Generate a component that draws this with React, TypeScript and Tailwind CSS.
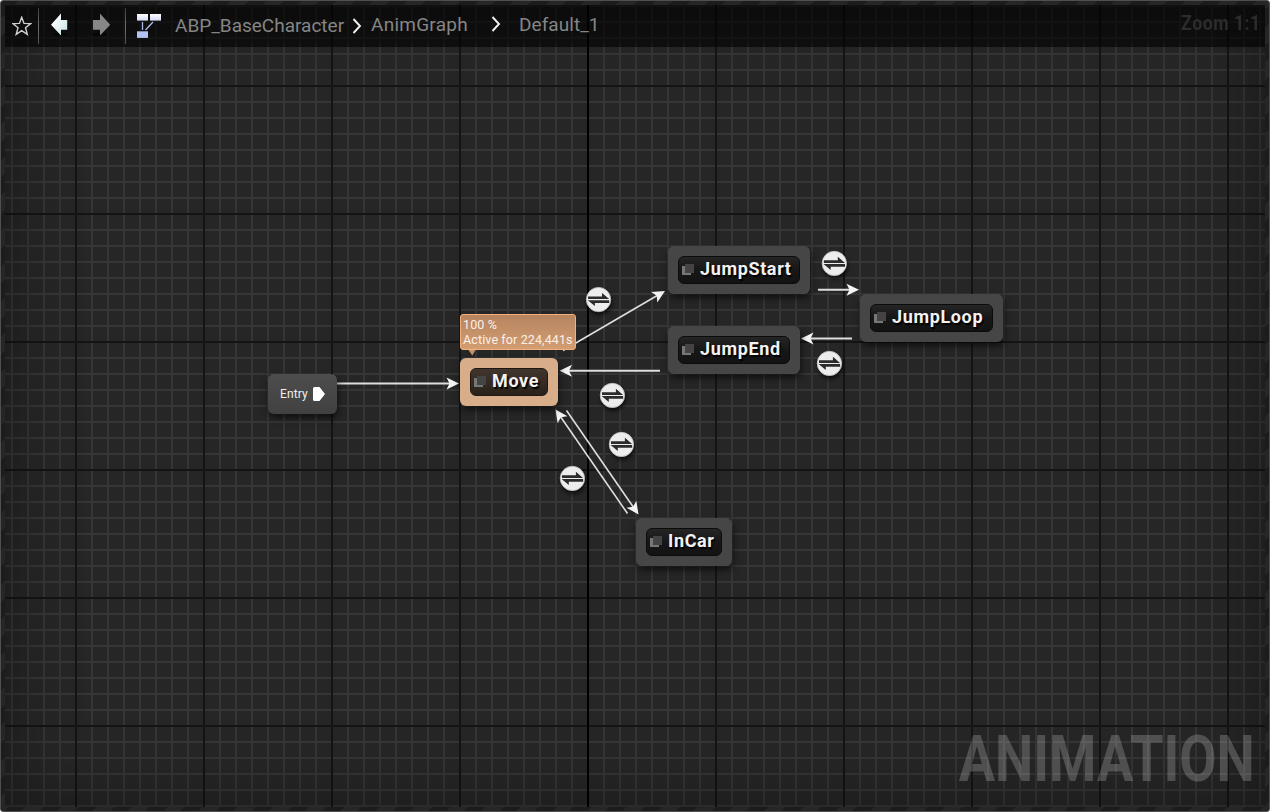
import React from "react";

const OPEN = "font-['Roboto',sans-serif]";

function Chevron() {
  return (
    <svg width="10" height="16" viewBox="0 0 10 16" className="shrink-0">
      <path d="M1.5 1 L8 8 L1.5 15" fill="none" stroke="#f2f2f2" strokeWidth="1.9" />
    </svg>
  );
}

function Header() {
  return (
    <header className="relative z-10 flex h-[42px] items-start bg-black/60">
      <div className="flex h-full w-[33px] pl-[7px] pt-[11px]">
        <svg width="20" height="20" viewBox="0 0 20 20">
          <path
            d="M9.7 1.2 L12 7.4 L18.7 7.6 L13.5 11.8 L15.3 18.4 L9.7 14.7 L4.2 18.4 L6 11.8 L0.8 7.6 L7.4 7.4 Z"
            fill="none"
            stroke="#cfcfcf"
            strokeWidth="1.4"
          />
        </svg>
      </div>
      <div className="mt-[3px] h-9 w-px bg-linear-to-b from-[#3c3c3c] via-[#707070] to-[#505050]" />
      <div className="w-[43px] pl-[11px] pt-[7px]">
        <svg width="20" height="26" viewBox="0 0 20 26">
          <defs>
            <linearGradient id="back" x1="0" y1="0" x2="1" y2="1">
              <stop offset="0.2" stopColor="#ffffff" />
              <stop offset="1" stopColor="#c4e4e4" />
            </linearGradient>
          </defs>
          <ellipse cx="11" cy="22.3" rx="7" ry="1.6" fill="#000" opacity="0.6" />
          <path d="M1 12.7 L11 1.4 V8 H17.2 V17.7 H11 V23.5 Z" fill="url(#back)" />
        </svg>
      </div>
      <div className="w-[43px] pt-[7px]">
        <svg width="43" height="26" viewBox="0 0 43 26">
          <ellipse cx="17" cy="22.3" rx="8" ry="1.6" fill="#000" opacity="0.6" />
          <path d="M28.2 12.7 L18 1.4 V8 H11 V17.7 H18 V23.5 Z" fill="#878787" />
        </svg>
      </div>
      <div className="mt-[3px] h-9 w-px bg-linear-to-b from-[#3c3c3c] via-[#707070] to-[#505050]" />
      <div className="w-[49px] pl-[11px] pt-[9px]">
        <svg width="25" height="25" viewBox="0 0 25 25">
          <defs>
            <linearGradient id="box" x1="0" y1="0" x2="0" y2="1">
              <stop offset="0" stopColor="#fff" />
              <stop offset="1" stopColor="#d3daf6" />
            </linearGradient>
          </defs>
          <rect x="0" y="0" width="11" height="6.6" fill="url(#box)" />
          <rect x="13" y="0" width="11" height="6.6" fill="url(#box)" />
          <rect x="0" y="17.3" width="11" height="6.6" fill="#b4c2f3" />
          <path d="M5.5 8 V16 M16 8 L8.5 16" stroke="#a9bbef" strokeWidth="1.3" />
        </svg>
      </div>
      <nav className={`flex text-[19px] leading-[22px] text-[#858585] ${OPEN}`}>
        <span className="mt-[10px] w-[177px] whitespace-nowrap">ABP_BaseCharacter</span>
        <span className="mt-[13px] w-[19px]"><Chevron /></span>
        <span className="mt-[9px] w-[120px] tracking-[0.25px]">AnimGraph</span>
        <span className="mt-[11px] w-[28px]"><Chevron /></span>
        <span className="mt-[9px] tracking-[0.05px]">Default_1</span>
      </nav>
      <div className="ml-auto mr-[4px] mt-[6px] flex w-[78px] shrink-0 justify-end">
        <span className={`origin-right scale-x-[0.85] whitespace-nowrap text-[21px] font-bold leading-6 tracking-[0.5px] text-[#2c2c2c] ${OPEN}`}>
          Zoom 1:1
        </span>
      </div>
    </header>
  );
}

type StateProps = { name: string; box: string; active?: boolean };

function StateNode({ name, box, active }: StateProps) {
  return (
    <div
      className={`absolute flex h-12 rounded-[6px] p-[10px] shadow-[1px_4px_7px_rgba(0,0,0,0.6)] ${
        active ? "bg-[#d8ad89]" : "bg-[#484848]/95"
      } ${box}`}
    >
      <div
        className={`flex h-7 w-full items-center rounded-[6px] border pl-[3px] ${
          active
            ? "border-[#201710] bg-linear-to-b from-[#40362d] to-[#2a211a]"
            : "border-[#0b0b0b] bg-linear-to-b from-[#252525] via-[#161716] to-[#121312]"
        }`}
      >
        <svg width="13" height="13" viewBox="0 0 13 13" className="-mt-px shrink-0" shapeRendering="crispEdges">
          <rect x="0" y="3" width="9" height="9" fill="#777" />
          <rect x="3" y="1" width="9" height="9" fill="#444" />
        </svg>
        <span
          className={`-mt-[3px] ml-[5px] whitespace-nowrap text-[18px] font-bold leading-6 tracking-[0.64px] text-[#f2f2f2] [text-shadow:1.5px_1.5px_1px_#000] ${OPEN}`}
        >
          {name}
        </span>
      </div>
    </div>
  );
}

const states: StateProps[] = [
  { name: "Move", box: "left-[460px] top-[358px] w-[98px]", active: true },
  { name: "JumpStart", box: "left-[668px] top-[246px] w-[142px]" },
  { name: "JumpEnd", box: "left-[668px] top-[326px] w-[132px]" },
  { name: "JumpLoop", box: "left-[860px] top-[294px] w-[143px]" },
  { name: "InCar", box: "left-[636px] top-[518px] w-[96px]" },
];

const rules: [number, number][] = [
  [598.5, 299.5],
  [834.3, 263.4],
  [829.4, 363.4],
  [612.4, 395.4],
  [621.4, 444.4],
  [572.4, 478.4],
];

const wires: [number, number, number, number, number][] = [
  [337, 383.5, 459, 383.5, 1.9],
  [563, 350.5, 665, 291, 1.6],
  [818, 289.7, 859, 289.7, 1.9],
  [852, 338.5, 801, 338.5, 1.9],
  [660, 370.7, 559.5, 370.7, 1.9],
  [566.5, 410.5, 638.5, 514.5, 1.6],
  [627.5, 513.5, 555.5, 409.5, 1.6],
];

function Wires() {
  return (
    <svg width="1270" height="812" className="absolute left-0 top-0">
      {wires.map(([x1, y1, x2, y2, w], i) => {
        const angle = (Math.atan2(y2 - y1, x2 - x1) * 180) / Math.PI;
        const len = Math.hypot(x2 - x1, y2 - y1);
        return (
          <g key={i} transform={`translate(${x2} ${y2}) rotate(${angle})`}>
            <line x1={-len} y1="0" x2="-8" y2="0" stroke="#dedede" strokeWidth={w} />
            <path d="M0 0 L-12.5 -6 L-9.5 0 L-12.5 6 Z" fill="#f4f4f4" />
          </g>
        );
      })}
    </svg>
  );
}

function RuleBadges() {
  return (
    <svg width="1270" height="812" className="absolute left-0 top-0">
      <defs>
        <filter id="drop" x="-30%" y="-30%" width="170%" height="180%">
          <feDropShadow dx="1" dy="3" stdDeviation="2" floodColor="#000" floodOpacity="0.7" />
        </filter>
      </defs>
      {rules.map(([x, y], i) => (
        <g key={i} transform={`translate(${x} ${y})`}>
          <circle r="12.1" fill="#ededed" stroke="#c4c4c4" strokeWidth="0.8" filter="url(#drop)" />
          <path d="M-10.4 -3.1 H3.5 V-6.6 L10.7 -0.5 H-10.4 Z" fill="#2b2b2b" />
          <path d="M10.7 0.7 H-10.8 L-3.6 6.5 V3.4 H10.7 Z" fill="#2b2b2b" />
        </g>
      ))}
    </svg>
  );
}

function Graph() {
  return (
    <div className="absolute left-0 top-0 h-[812px] w-[1270px]">
      <Wires />
      <div className={`absolute left-[268px] top-[374px] flex h-10 w-[69px] items-center rounded-[6px] bg-linear-to-b from-[#4d4d4d] to-[#414141] pl-3 text-[12px] leading-4 text-[#f0f0f0] shadow-[1px_4px_7px_rgba(0,0,0,0.6)] ${OPEN}`}>
        <span className="w-[33px] tracking-[0.1px]">Entry</span>
        <svg width="12" height="14" viewBox="0 0 12 14">
          <path d="M1.5 0 H6.5 L12 7 L6.5 14 H1.5 Q0 14 0 12.5 V1.5 Q0 0 1.5 0 Z" fill="#fff" />
        </svg>
      </div>
      <div className={`absolute left-[460px] top-[314px] h-[36px] w-[116px] rounded-[3px] border border-[#f2b07d] bg-linear-to-b from-[#b58460] to-[#d49d72] pl-[2px] pt-[2px] text-[12.5px] leading-[15px] tracking-[0.12px] text-[#fbf1e9] ${OPEN}`}>
        <div className="whitespace-nowrap">100 %</div>
        <div className="whitespace-nowrap">Active for 224,441s</div>
        <svg width="8" height="6" viewBox="0 0 8 6" className="absolute left-[7px] top-[35px]">
          <path d="M0.5 0 H7.5 L4.3 5.5 Z" fill="#c8926a" />
        </svg>
      </div>
      {states.map((s) => (
        <StateNode key={s.name} {...s} />
      ))}
      <RuleBadges />
    </div>
  );
}

export default function App() {
  return (
    <main className="relative flex h-[812px] w-[1270px] flex-col overflow-hidden rounded-[3px] border border-[#505050] bg-[repeating-linear-gradient(135deg,#1b1c1b_0px,#1b1c1b_12.5px,#252625_12.5px,#252625_25px)] p-1">
      <div className="flex min-h-0 flex-1 flex-col bg-[#262626] bg-[linear-gradient(90deg,#000_2px,transparent_2px),linear-gradient(90deg,#141414_2px,transparent_2px),linear-gradient(#141414_2px,transparent_2px),linear-gradient(90deg,#353535_2px,transparent_2px),linear-gradient(#353535_2px,transparent_2px)] bg-[size:1270px_812px,128px_128px,128px_128px,16px_16px,16px_16px] bg-[position:582px_0px,70px_0px,0px_80px,6px_0px,0px_0px]">
        <Header />
        <div className="relative z-10 flex flex-1 items-end justify-end pb-[10px] pr-[10px]">
          <div className="flex w-[294px] justify-end">
            <span className={`origin-right scale-x-[0.832] text-[65px] font-bold leading-[76px] text-white/20 ${OPEN}`}>
              ANIMATION
            </span>
          </div>
        </div>
      </div>
      <div className="pointer-events-none absolute inset-1 shadow-[inset_0_0_70px_rgba(0,0,0,0.4)]" />
      <div className="absolute -left-px -top-px">
        <Graph />
      </div>
    </main>
  );
}
